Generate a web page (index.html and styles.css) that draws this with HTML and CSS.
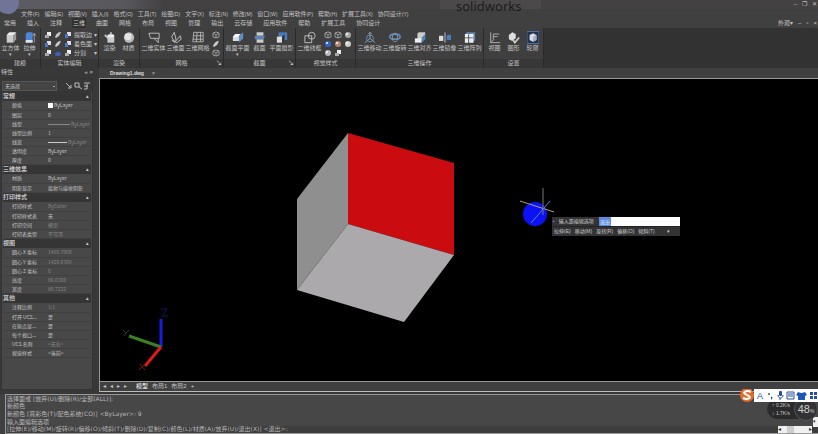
FILE: index.html
```html
<!DOCTYPE html>
<html lang="zh-CN">
<head>
    <meta charset="UTF-8">
    <meta name="viewport" content="width=device-width, initial-scale=1.0">
    <title>Drawing1.dwg</title>
    <link rel="stylesheet" href="styles.css">
</head>
<body>
    <svg class="defs" width="0" height="0">
        <symbol id="cube" viewBox="0 0 14 14"><path d="M2 4l3-3h8l-2 3z" fill="#eee"/><path d="M2 4h8v9H2z" fill="#ccc"/><path d="M10 4l3-3v8l-3 4z" fill="#999"/></symbol>
        <symbol id="extrude" viewBox="0 0 14 14"><path d="M2 3l2-2h6v12H2z" fill="#4d86d8"/><path d="M2 10h8v3H2z" fill="#e8e8e8"/><path d="M12 13V3m-2 2l2-3 2 3" stroke="#aaa" fill="none"/></symbol>
        <symbol id="teapot" viewBox="0 0 14 14"><path d="M4 5h8v8H4z" fill="#ccc"/><ellipse cx="8" cy="5" rx="4" ry="2" fill="#eee"/><path d="M1 4l4 4M8 1v3" stroke="#ccc" stroke-width="2" fill="none"/></symbol>
        <symbol id="ball" viewBox="0 0 14 14"><circle cx="7" cy="7" r="6" fill="#bbb"/><circle cx="6" cy="6" r="4" fill="#e4e4e4"/></symbol>
        <symbol id="solid2d" viewBox="0 0 14 14"><path d="M1 2h12v6H3zM7 8l5 5V8" stroke="#ccc" fill="none"/></symbol>
        <symbol id="face3d" viewBox="0 0 14 14"><path d="M2 6l3-5 2 8-2 3zM6 12l6-7 1 4-5 4zM2 10l4 3" stroke="#ccc" fill="none"/></symbol>
        <symbol id="mesh" viewBox="0 0 14 14"><path d="M2 1h11v11H1zM6 1L5 12M10 1v11M2 5h11M1 9h12" stroke="#bbb" fill="none"/></symbol>
        <symbol id="section" viewBox="0 0 14 14"><path d="M1 6l3-3h6L8 11H1z" fill="#ddd"/><path d="M8 5l5-4v7l-5 5z" fill="#5c8fc9"/><path d="M4 3h5l-2 3H1z" fill="#fff"/></symbol>
        <symbol id="live" viewBox="0 0 14 14"><path d="M3 1h8v4H3zM3 9h8v4H3z" fill="#ccc"/><path d="M1 5h12l-2 4H1z" fill="#5c82ba"/></symbol>
        <symbol id="flatshot" viewBox="0 0 14 14"><path d="M3 1h10v9H3z" fill="#467dba"/><path d="M1 6h6v7H1z" fill="#ddd"/><path d="M7 6l3-3v7l-3 3z" fill="#333"/></symbol>
        <symbol id="wire" viewBox="0 0 14 14"><path d="M1 5h8v8H1z" stroke="#ccc" fill="none"/><circle cx="9" cy="5" r="4" stroke="#ccc" fill="none"/></symbol>
        <symbol id="move3d" viewBox="0 0 14 14"><path d="M7 1v7l-6 5M7 8l6 5M5 3l2-2 2 2" stroke="#aaa" fill="none"/><circle cx="7" cy="8" r="4" stroke="#5f9bd2" fill="none"/></symbol>
        <symbol id="rotate3d" viewBox="0 0 14 14"><ellipse cx="7" cy="6" rx="6" ry="3" stroke="#5b8cbc" stroke-width="2" fill="none"/><ellipse cx="7" cy="7" rx="3" ry="5" stroke="#999" fill="none"/></symbol>
        <symbol id="align3d" viewBox="0 0 14 14"><path d="M4 2l2-1h7v7l-2 2H4z" fill="#ccc"/><path d="M1 8h8v5H1z" fill="#efefef"/><path d="M9 7l4-4v6l-4 4z" fill="#5085bd"/></symbol>
        <symbol id="mirror3d" viewBox="0 0 14 14"><path d="M0 5h5v6H0z" fill="#ddd"/><path d="M7 1v12" stroke="#ccc"/><path d="M9 4h5v6H9z" fill="#457fc0"/></symbol>
        <symbol id="array3d" viewBox="0 0 14 14"><path d="M3 1h10v9l-3 3V4H1z" fill="#5e87b0"/><path d="M1 3h4v4H1zM6 3h5v4H6zM1 8h4v5H1zM6 8h5v5H6z" fill="#eee"/></symbol>
        <symbol id="ucs" viewBox="0 0 14 14"><path d="M2 1v12h11M5 9V3h7M5 6h5M2 13l4-4" stroke="#bbb" fill="none"/></symbol>
        <symbol id="shape" viewBox="0 0 14 14"><path d="M1 4l4-3 4 2v5l-4 3-4-2z" fill="#ddd"/><path d="M6 10l2 3 5-6" stroke="#ccc" stroke-width="2" fill="none"/></symbol>
        <symbol id="outline" viewBox="0 0 14 14"><path d="M0 0h14v14H0z" fill="#24334f" stroke="#5276b1"/><path d="M3 4l4-2 4 2v6l-4 2-4-2z" fill="#d9dee8"/><path d="M7 6l4-2v6l-4 2z" fill="#a8b0bf"/></symbol>
        <symbol id="union" viewBox="0 0 8 8"><path d="M3 1h4v4H3z" fill="#eee"/><path d="M1 4h4v3H1z" fill="#aaa"/></symbol>
        <symbol id="fillet" viewBox="0 0 8 8"><path d="M1 6c1-3 3-5 6-5L5 5 2 7z" fill="#ccc"/></symbol>
        <symbol id="cut" viewBox="0 0 8 8"><path d="M3 1h4v4H3z" fill="#ddd"/><path d="M1 3h3v4H1z" fill="#477bca"/></symbol>
        <symbol id="press" viewBox="0 0 8 8"><path d="M2 1h4v3H2z" fill="#383f58"/><ellipse cx="4" cy="5" rx="3" ry="2" fill="#405fae"/></symbol>
        <symbol id="dot" viewBox="0 0 8 8"><circle cx="4" cy="4" r="3"/><circle cx="3" cy="3" r="1" fill="#fff"/></symbol>
        <symbol id="hollow" viewBox="0 0 8 8"><path d="M1 2l3-1 3 1v4L4 7 1 6zM1 2l3 2 3-2M4 4v3" stroke="#999" fill="none"/></symbol>
    </svg>

    <header>
        <div class="titlebar">
            <span class="avatar"></span>
            <span class="caption">solidworks</span>
            <div class="window-buttons">
                <button aria-label="最小化">–</button>
                <button aria-label="还原">❐</button>
                <button aria-label="关闭">✕</button>
            </div>
        </div>
        <nav class="menu">
            <a href="#">文件<small>(F)</small></a>
            <a href="#">编辑<small>(E)</small></a>
            <a href="#">视图<small>(V)</small></a>
            <a href="#">插入<small>(I)</small></a>
            <a href="#">格式<small>(O)</small></a>
            <a href="#">工具<small>(T)</small></a>
            <a href="#">绘图<small>(D)</small></a>
            <a href="#">文字<small>(X)</small></a>
            <a href="#">标注<small>(N)</small></a>
            <a href="#">修改<small>(M)</small></a>
            <a href="#">窗口<small>(W)</small></a>
            <a href="#">应用软件<small>(P)</small></a>
            <a href="#">帮助<small>(H)</small></a>
            <a href="#">扩展工具<small>(X)</small></a>
            <a href="#">协同设计<small>(Y)</small></a>
        </nav>
        <nav class="tabs">
            <a href="#">常用</a>
            <a href="#">插入</a>
            <a href="#">注释</a>
            <a href="#" class="active">三维</a>
            <a href="#">曲面</a>
            <a href="#">网格</a>
            <a href="#">布局</a>
            <a href="#">视图</a>
            <a href="#">管理</a>
            <a href="#">输出</a>
            <a href="#">云存储</a>
            <a href="#">应用软件</a>
            <a href="#">帮助</a>
            <a href="#">扩展工具</a>
            <a href="#">协同设计</a>
            <div class="tab-right"><span>外观▾</span><span>–</span><span>▫</span><span>×</span></div>
        </nav>
    </header>

    <div class="ribbon">
        <section class="panel">
            <div class="tools">
                <button class="tool"><svg><use href="#cube"/></svg>立方体<i>▾</i></button>
                <button class="tool"><svg><use href="#extrude"/></svg>拉伸<i>▾</i></button>
            </div>
            <h2>建模</h2>
        </section>
        <section class="panel">
            <div class="tools">
                <div class="mini-grid">
                    <svg><use href="#union"/></svg><svg><use href="#fillet"/></svg><svg><use href="#cut"/></svg>
                    <svg><use href="#cut"/></svg><svg><use href="#fillet"/></svg><svg><use href="#cut"/></svg>
                    <svg><use href="#union"/></svg><svg><use href="#press"/></svg><svg><use href="#union"/></svg>
                </div>
                <div class="mini-list">
                    <button>提取边<i>▾</i></button>
                    <button>着色面<i>▾</i></button>
                    <button>分割<i>▾</i></button>
                </div>
            </div>
            <h2>实体编辑</h2>
        </section>
        <section class="panel">
            <div class="tools">
                <button class="tool"><svg><use href="#teapot"/></svg>渲染</button>
                <button class="tool"><svg><use href="#ball"/></svg>材质</button>
            </div>
            <h2>渲染</h2>
        </section>
        <section class="panel">
            <div class="tools">
                <button class="tool wide"><svg><use href="#solid2d"/></svg>二维实体</button>
                <button class="tool"><svg><use href="#face3d"/></svg>三维面</button>
                <button class="tool wide"><svg><use href="#mesh"/></svg>三维网格</button>
                <div class="mini-grid single">
                    <svg><use href="#hollow"/></svg><svg><use href="#fillet"/></svg><svg><use href="#hollow"/></svg>
                </div>
            </div>
            <h2>网格<b>↘</b></h2>
        </section>
        <section class="panel">
            <div class="tools">
                <button class="tool wide"><svg><use href="#section"/></svg>截面平面<i>▾</i></button>
                <button class="tool"><svg><use href="#live"/></svg>截面</button>
                <button class="tool wide"><svg><use href="#flatshot"/></svg>平面摄影</button>
            </div>
            <h2>截面<b>↘</b></h2>
        </section>
        <section class="panel">
            <div class="tools">
                <button class="tool wide"><svg><use href="#wire"/></svg>二维线框</button>
                <div class="mini-grid">
                    <svg><use href="#hollow"/></svg><svg><use href="#hollow"/></svg><svg fill="#aaa"><use href="#dot"/></svg>
                    <svg fill="#2f66d0"><use href="#dot"/></svg><svg fill="#b98570"><use href="#dot"/></svg><svg fill="#ccc"><use href="#dot"/></svg>
                    <svg fill="#bbb"><use href="#dot"/></svg><svg><use href="#union"/></svg>
                </div>
            </div>
            <h2>视觉样式</h2>
        </section>
        <section class="panel">
            <div class="tools">
                <button class="tool wide"><svg><use href="#move3d"/></svg>三维移动</button>
                <button class="tool wide"><svg><use href="#rotate3d"/></svg>三维旋转</button>
                <button class="tool wide"><svg><use href="#align3d"/></svg>三维对齐</button>
                <button class="tool wide"><svg><use href="#mirror3d"/></svg>三维镜像</button>
                <button class="tool wide"><svg><use href="#array3d"/></svg>三维阵列</button>
            </div>
            <h2>三维操作</h2>
        </section>
        <section class="panel">
            <div class="tools">
                <button class="tool"><svg><use href="#ucs"/></svg>视图</button>
                <button class="tool"><svg><use href="#shape"/></svg>图形</button>
                <button class="tool"><svg><use href="#outline"/></svg>轮廓</button>
            </div>
            <h2>设置</h2>
        </section>
    </div>

    <main>
        <aside>
            <div class="aside-title"><span>特性</span><span>« ×</span></div>
            <div class="aside-box">
                <div class="picker">
                    <select aria-label="选择对象"><option>无选择</option></select>
                    <svg width="26" height="9"><path d="M2 2l5 5M4 7h3V4M11 2h4v4h-4zM15 6l3 2M20 2h6M20 5h4M23 3v5M20 8h3" stroke="#bbb" fill="none"/></svg>
                </div>
                <table>
                    <tr class="group"><th colspan="2">常规<i>▴</i></th></tr>
                    <tr><td>颜色</td><td><span class="swatch"></span>ByLayer</td></tr>
                    <tr><td>图层</td><td>0</td></tr>
                    <tr><td>线型</td><td class="dim"><span class="line"></span>ByLayer</td></tr>
                    <tr><td>线型比例</td><td>1</td></tr>
                    <tr><td>线宽</td><td class="dim"><span class="line bright"></span>ByLayer</td></tr>
                    <tr><td>透明度</td><td>ByLayer</td></tr>
                    <tr><td>厚度</td><td>0</td></tr>
                    <tr class="group"><th colspan="2">三维效果<i>▴</i></th></tr>
                    <tr><td>材质</td><td>ByLayer</td></tr>
                    <tr><td>阴影显示</td><td>投射与接收阴影</td></tr>
                    <tr class="group"><th colspan="2">打印样式<i>▴</i></th></tr>
                    <tr><td>打印样式</td><td class="dim">ByColor</td></tr>
                    <tr><td>打印样式表</td><td>无</td></tr>
                    <tr><td>打印空间</td><td class="dim">模型</td></tr>
                    <tr><td>打印表类型</td><td class="dim">不可用</td></tr>
                    <tr class="group"><th colspan="2">视图<i>▴</i></th></tr>
                    <tr><td>圆心 X 坐标</td><td class="dim">1490.7060</td></tr>
                    <tr><td>圆心 Y 坐标</td><td class="dim">1420.6309</td></tr>
                    <tr><td>圆心 Z 坐标</td><td class="dim">0</td></tr>
                    <tr><td>高度</td><td class="dim">86.6360</td></tr>
                    <tr><td>宽度</td><td class="dim">86.7222</td></tr>
                    <tr class="group"><th colspan="2">其他<i>▴</i></th></tr>
                    <tr><td>注释比例</td><td class="dim">1:1</td></tr>
                    <tr><td>打开 UCS...</td><td>是</td></tr>
                    <tr><td>在原点显...</td><td>是</td></tr>
                    <tr><td>每个视口...</td><td>是</td></tr>
                    <tr><td>UCS 名称</td><td class="dim">&lt;无名&gt;</td></tr>
                    <tr><td>视觉样式</td><td>&lt;当前&gt;</td></tr>
                </table>
            </div>
        </aside>

        <div class="document">
            <div class="doc-tab"><b>Drawing1.dwg</b><span>×</span></div>
            <div class="viewport">
                <svg class="drawing">
                    <!-- cube -->
                    <path d="M248 54L197 120V211L248 145z" fill="#8f8f8f"/>
                    <path d="M248 54L354 84V176L248 145z" fill="#ca0c10"/>
                    <path d="M248 145L354 176L304 243L197 211z" fill="#aba9ab"/>
                    <!-- sphere and crosshair -->
                    <circle cx="435" cy="135" r="12" fill="#0b12f5"/>
                    <path d="M443 109v27" stroke="#777"/>
                    <path d="M420 122l34 11" stroke="#a8a67c"/>
                    <path d="M450 122l-19 22" stroke="#647ac9"/>
                    <!-- ucs axes -->
                    <path d="M61 268V240" stroke="#1c1ce0" stroke-width="3"/>
                    <path d="M61 268L29 257" stroke="#398027" stroke-width="3"/>
                    <path d="M61 268L45 287" stroke="#e01818" stroke-width="3"/>
                    <path d="M61 230h6l-5 7h6" stroke="#14145c" fill="none"/>
                    <path d="M23 251l3 3 3-3M26 254l-2 3" stroke="#1f4419" fill="none"/>
                    <path d="M40 285l5 6M45 285l-6 6" stroke="#801414" fill="none"/>
                </svg>
                <div class="prompt">
                    <label for="option"><span>▪</span>输入面编辑选项</label>
                    <div class="field"><input id="option" value="退出"></div>
                    <p><span>拉伸(E)</span><span>移动(M)</span><span>旋转(R)</span><span>偏移(O)</span><span>倾斜(T)</span><i>▾</i></p>
                </div>
            </div>
            <div class="layouts">
                <span>◂</span><span>◂</span><span>▸</span><span>▸</span>
                <a href="#" class="active">模型</a><a href="#">布局1</a><a href="#">布局2</a><a href="#">+</a>
            </div>
        </div>
    </main>

    <footer>
        <div class="history">
            <p>选择面或 [放弃(U)/删除(R)/全部(ALL)]:</p>
            <p>新颜色</p>
            <p>新颜色 [真彩色(T)/配色系统(CO)] &lt;ByLayer&gt;: 9</p>
            <p>输入面编辑选项</p>
        </div>
        <div class="command">
            <span>[拉伸(E)/移动(M)/旋转(R)/偏移(O)/倾斜(T)/删除(D)/复制(C)/颜色(L)/材质(A)/放弃(U)/退出(X)] &lt;退出&gt;:</span>
            <div class="scroll"><span>◂</span><i></i><span>▸</span></div>
        </div>
        <div class="scroll-down">▾</div>
    </footer>

    <div class="monitor">
        <div class="speed"><span>↑ 0.2K/s</span><span>↓ 1.7K/s</span></div>
        <div class="gauge">48<small>%</small></div>
    </div>
    <div class="ime">
        <svg width="78" height="13">
            <path d="M14 0h64v13H14z" fill="#fff"/>
            <circle cx="7" cy="6" r="7" fill="#e46b29"/>
            <path d="M11 3c-4-2-9 0-6 2l4 2c3 2-2 4-6 2" stroke="#fff" stroke-width="2" fill="none"/>
            <g fill="#274f9b">
                <circle cx="29" cy="5" r="1"/><path d="M31 8c2-1 2 1 0 3z"/>
                <rect x="39" y="2" width="3" height="5" rx="1"/>
                <path d="M58 3l3 1h1l3-1 2 3-2 1v4h-7V7l-2-1z" fill="#1d58b8"/>
                <path d="M70 3h3v3h-3zM74 3h3v3h-3zM70 7h3v3h-3zM74 7h3v3h-3z"/>
            </g>
            <path d="M38 6c0 4 5 4 5 0M40 9v2M47 3h7v7h-7zM48 5h5M48 7h5" stroke="#274f9b" fill="none"/>
            <text x="17" y="10">A</text>
        </svg>
    </div>
</body>
</html>
```
FILE: styles.css
```css
* {
    box-sizing: border-box;
}
body {
    margin: 0;
    height: 100vh;
    display: flex;
    flex-direction: column;
    overflow: hidden;
    background-color: #414041;
    color: #c4c4c4;
    font-family: "Liberation Sans", "Noto Sans CJK SC", sans-serif;
    font-size: 6px;
    line-height: 8px;
}
a {
    color: inherit;
    text-decoration: none;
}
button {
    padding: 0;
    border: none;
    background: none;
    color: inherit;
    font: inherit;
}
h2, p {
    margin: 0;
    font-size: inherit;
    font-weight: normal;
}
i {
    font-style: normal;
}
small {
    font-size: 5px;
}
.defs {
    position: absolute;
}

/* title and menus */
.titlebar {
    position: relative;
    height: 9px;
    background: linear-gradient(90deg, #5d5c63, #59585d 15%, #434142 20%);
}
.avatar {
    position: absolute;
    left: -4px;
    top: -9px;
    width: 23px;
    height: 23px;
    border-radius: 50%;
    background-color: #707597;
}
.caption {
    position: absolute;
    left: 440px;
    top: 0;
    height: 9px;
    padding: 0 20px 0 16px;
    background-color: #4b494a;
    color: #1c1c1c;
    font-family: "Noto Sans", sans-serif;
    font-size: 13px;
    line-height: 13px;
}
.window-buttons {
    display: flex;
    justify-content: flex-end;
    gap: 5px;
    padding-right: 1px;
}
.menu {
    display: flex;
    gap: 5px;
    height: 10px;
    padding-left: 21px;
    line-height: 10px;
}
.tabs {
    display: flex;
    gap: 11px;
    height: 9px;
    padding-left: 4px;
    line-height: 9px;
}
.tabs .active {
    background-color: #303030;
    box-shadow: 0 0 0 1px #303030;
}
.tab-right {
    display: flex;
    gap: 5px;
    margin-left: auto;
    padding-right: 1px;
}

/* ribbon */
.ribbon {
    display: flex;
    height: 40px;
    background-color: #333233;
}
.panel {
    display: flex;
    flex-direction: column;
    padding: 3px 1px 0;
    border-right: 1px solid #2b2a2b;
    background-color: #403f40;
}
.tools {
    display: flex;
    flex: 1;
}
.tool {
    display: flex;
    flex-direction: column;
    align-items: center;
    width: 19px;
    line-height: 8px;
    white-space: nowrap;
}
.tool.wide {
    width: 25px;
}
.tool svg {
    width: 12px;
    height: 13px;
}
.tool i {
    font-size: 5px;
    line-height: 4px;
}
.panel h2 {
    position: relative;
    height: 9px;
    margin: 0 -1px;
    background-color: #383738;
    text-align: center;
}
.panel h2 b {
    position: absolute;
    right: 1px;
}
.mini-grid {
    display: grid;
    grid-template-columns: repeat(3, 8px);
    grid-auto-rows: 8px;
    gap: 1px 2px;
    padding: 0 2px;
}
.mini-grid.single {
    grid-template-columns: 8px;
}
.mini-grid svg {
    width: 8px;
    height: 8px;
}
.mini-list {
    display: flex;
    flex-direction: column;
    gap: 1px;
    width: 23px;
}
.mini-list button {
    display: flex;
    justify-content: space-between;
    line-height: 8px;
}

/* properties */
main {
    display: flex;
    flex: 1;
    min-height: 0;
}
aside {
    display: flex;
    flex-direction: column;
    width: 99px;
    padding: 0 6px 4px 1px;
    background-color: #393839;
}
.aside-title {
    display: flex;
    justify-content: space-between;
    height: 10px;
}
.aside-box {
    flex: 1;
    padding: 1px;
    background-color: #494849;
    border: 1px solid #333;
}
.picker {
    display: flex;
    align-items: center;
    justify-content: space-between;
    height: 13px;
    margin: -1px;
    padding-right: 2px;
    background-color: #393839;
}
.picker select {
    appearance: none;
    width: 55px;
    height: 10px;
    padding: 0 2px;
    border: 1px solid #555;
    border-radius: 0;
    background: #454445 linear-gradient(#aaa, #aaa) no-repeat 50px 4px / 2px 1px;
    color: inherit;
    font: inherit;
    font-size: 5px;
}
table {
    width: 100%;
    border-collapse: collapse;
    table-layout: fixed;
    font-family: "Noto Sans CJK SC", sans-serif;
    font-size: 5px;
    line-height: 8px;
}
td {
    height: 9px;
    padding: 0;
    border-bottom: 1px solid #414041;
    white-space: nowrap;
}
td:first-child {
    padding-left: 9px;
}
td:last-child {
    padding-left: 1px;
}
.dim {
    color: #858585;
}
.group th {
    height: 10px;
    padding: 0;
    background-color: #363536;
    font-size: 6px;
    text-align: left;
}
.group i {
    float: right;
    padding-right: 2px;
    font-size: 5px;
}
.swatch {
    display: inline-block;
    width: 5px;
    height: 5px;
    margin-right: 1px;
    background-color: #fff;
    vertical-align: middle;
}
.line {
    display: inline-block;
    width: 22px;
    height: 1px;
    margin-right: 1px;
    background-color: #888;
    vertical-align: middle;
}
.line.bright {
    width: 19px;
    background-color: #ccc;
}

/* drawing */
.document {
    display: flex;
    flex: 1;
    flex-direction: column;
    min-width: 0;
    border-bottom: 2px solid #393839;
}
.doc-tab {
    display: flex;
    gap: 8px;
    height: 10px;
    padding-left: 11px;
    font-size: 5px;
    line-height: 10px;
}
.doc-tab b {
    color: #ddd;
}
.viewport {
    position: relative;
    flex: 1;
    border: 1px solid #999;
    border-width: 1px 0 1px 1px;
    background-color: #000;
}
.drawing {
    display: block;
    width: 100%;
    height: 100%;
}
.prompt {
    position: absolute;
    left: 452px;
    top: 138px;
    display: grid;
    grid-template-columns: 47px 81px;
    background-color: #333335;
    color: #ccc;
    font-size: 5px;
    line-height: 9px;
    white-space: nowrap;
}
.prompt label span {
    padding: 0 4px 0 1px;
    color: #7d9ddf;
}
.field {
    background-color: #fff;
    line-height: 0;
}
.prompt input {
    width: 12px;
    height: 9px;
    padding: 0 1px;
    border: none;
    background-color: #5e8ce0;
    color: #dce6ff;
    font: inherit;
    font-size: 5px;
}
.prompt p {
    display: flex;
    gap: 4px;
    grid-column: span 2;
    padding-left: 2px;
    height: 10px;
    border-top: 1px solid #222;
}
.prompt p i {
    padding-left: 8px;
}
.layouts {
    display: flex;
    gap: 4px;
    height: 10px;
    padding-left: 3px;
    border-bottom: 1px solid #bbb;
    border-left: 1px solid #999;
    line-height: 9px;
}
.layouts .active {
    margin-left: 5px;
    color: #fff;
}

/* command line */
footer {
    position: relative;
    height: 40px;
    margin-left: 5px;
    border: 1px solid #999;
    border-width: 1px 0 1px 1px;
    background-color: #484748;
    color: #b8b8b8;
    font-family: "DejaVu Sans", "Noto Sans CJK SC", sans-serif;
}
.history {
    padding-left: 1px;
}
.history p {
    height: 8px;
    line-height: 7px;
}
.history p:first-child {
    height: 7px;
}
.command {
    display: flex;
    justify-content: space-between;
    height: 7px;
    padding-left: 1px;
    background-color: #3e3d3e;
    line-height: 6px;
}
.scroll {
    display: flex;
    justify-content: space-between;
    width: 34px;
    margin-right: 6px;
    background-color: #f0f0f0;
    color: #333;
}
.scroll i {
    width: 7px;
    margin-right: 9px;
    background-color: #ccc;
}
.scroll-down {
    position: absolute;
    right: 0;
    bottom: 6px;
    width: 5px;
    height: 10px;
    background-color: #f0f0f0;
    color: #333;
    font-size: 5px;
}

/* floating widgets */
.ime {
    position: absolute;
    right: 0;
    bottom: 32px;
    height: 13px;
}
.ime text {
    fill: #274f9b;
    font-size: 9px;
}
.monitor {
    position: absolute;
    right: 0;
    bottom: 15px;
    display: flex;
    align-items: center;
    justify-content: space-between;
    width: 51px;
    height: 20px;
    border-radius: 10px;
    background-color: #2b2b2d;
}
.speed {
    display: flex;
    flex-direction: column;
    padding-left: 5px;
    font-size: 5px;
}
.gauge {
    width: 24px;
    height: 24px;
    border: 1px solid #555;
    border-radius: 50%;
    background-color: #303235;
    color: #ccc;
    font-size: 11px;
    line-height: 22px;
    text-align: center;
}
```
